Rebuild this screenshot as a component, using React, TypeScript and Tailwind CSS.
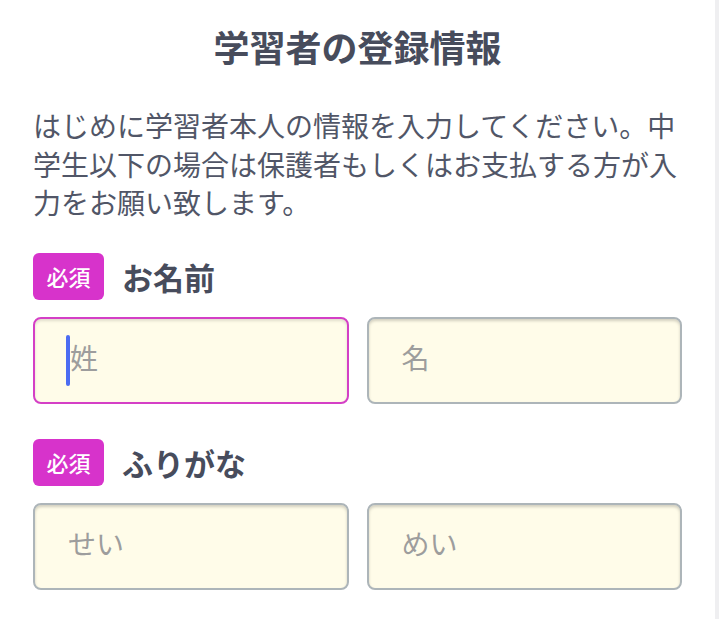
import React from "react";

function Badge() {
  return (
    <span className="flex h-[47px] w-[71px] items-center justify-center rounded-[6px] bg-[#d733cb] text-[22px] font-medium leading-none text-white">
      必須
    </span>
  );
}

function Field({
  placeholder,
  focused,
}: {
  placeholder: string;
  focused?: boolean;
}) {
  return (
    <div
      className={
        focused
          ? "flex h-[87px] items-center rounded-[8px] border-2 border-[#d43fc6] bg-[#fffce9] pl-[31px] shadow-[inset_0_2px_3px_rgba(0,0,0,0.12)]"
          : "flex h-[87px] items-center rounded-[8px] border-2 border-[#adb5b9] bg-[#fffce9] pl-[33px] shadow-[inset_0_2px_3px_rgba(0,0,0,0.18)]"
      }
    >
      {focused && (
        <span className="h-[51px] w-[4px] rounded-full bg-[#4c6cf2]" />
      )}
      <span className="mb-[6px] text-[28px] leading-none text-[#9d9d9d]">{placeholder}</span>
    </div>
  );
}

function Group({
  label,
  first,
  second,
  focusFirst,
  className,
}: {
  label: string;
  first: string;
  second: string;
  focusFirst?: boolean;
  className?: string;
}) {
  return (
    <div className={className}>
      <div className="flex items-center gap-[18px]">
        <Badge />
        <span className="text-[31px] font-bold leading-none text-[#474c5c]">
          {label}
        </span>
      </div>
      <div className="mt-[17px] grid grid-cols-2 gap-[18px]">
        <Field placeholder={first} focused={focusFirst} />
        <Field placeholder={second} />
      </div>
    </div>
  );
}

export default function App() {
  return (
    <div className="flex min-h-[619px] w-full bg-white font-['Noto_Sans_CJK_JP','Noto_Sans',sans-serif]">
      <main className="flex-1 px-[33px] pt-[22px]">
        <h1 className="text-center text-[36px] font-bold leading-[48px] text-[#474c5c]">
          学習者の登録情報
        </h1>
        <p className="mt-[36px] text-[28px] leading-[38.5px] text-[#515667]">
          はじめに学習者本人の情報を入力してください。中学生以下の場合は保護者もしくはお支払する方が入力をお願い致します。
        </p>
        <Group
          className="mt-[31px]"
          label="お名前"
          first="姓"
          second="名"
          focusFirst
        />
        <Group className="mt-[35px]" label="ふりがな" first="せい" second="めい" />
      </main>
      <div className="w-[4px] bg-[#efeff1]" />
    </div>
  );
}
